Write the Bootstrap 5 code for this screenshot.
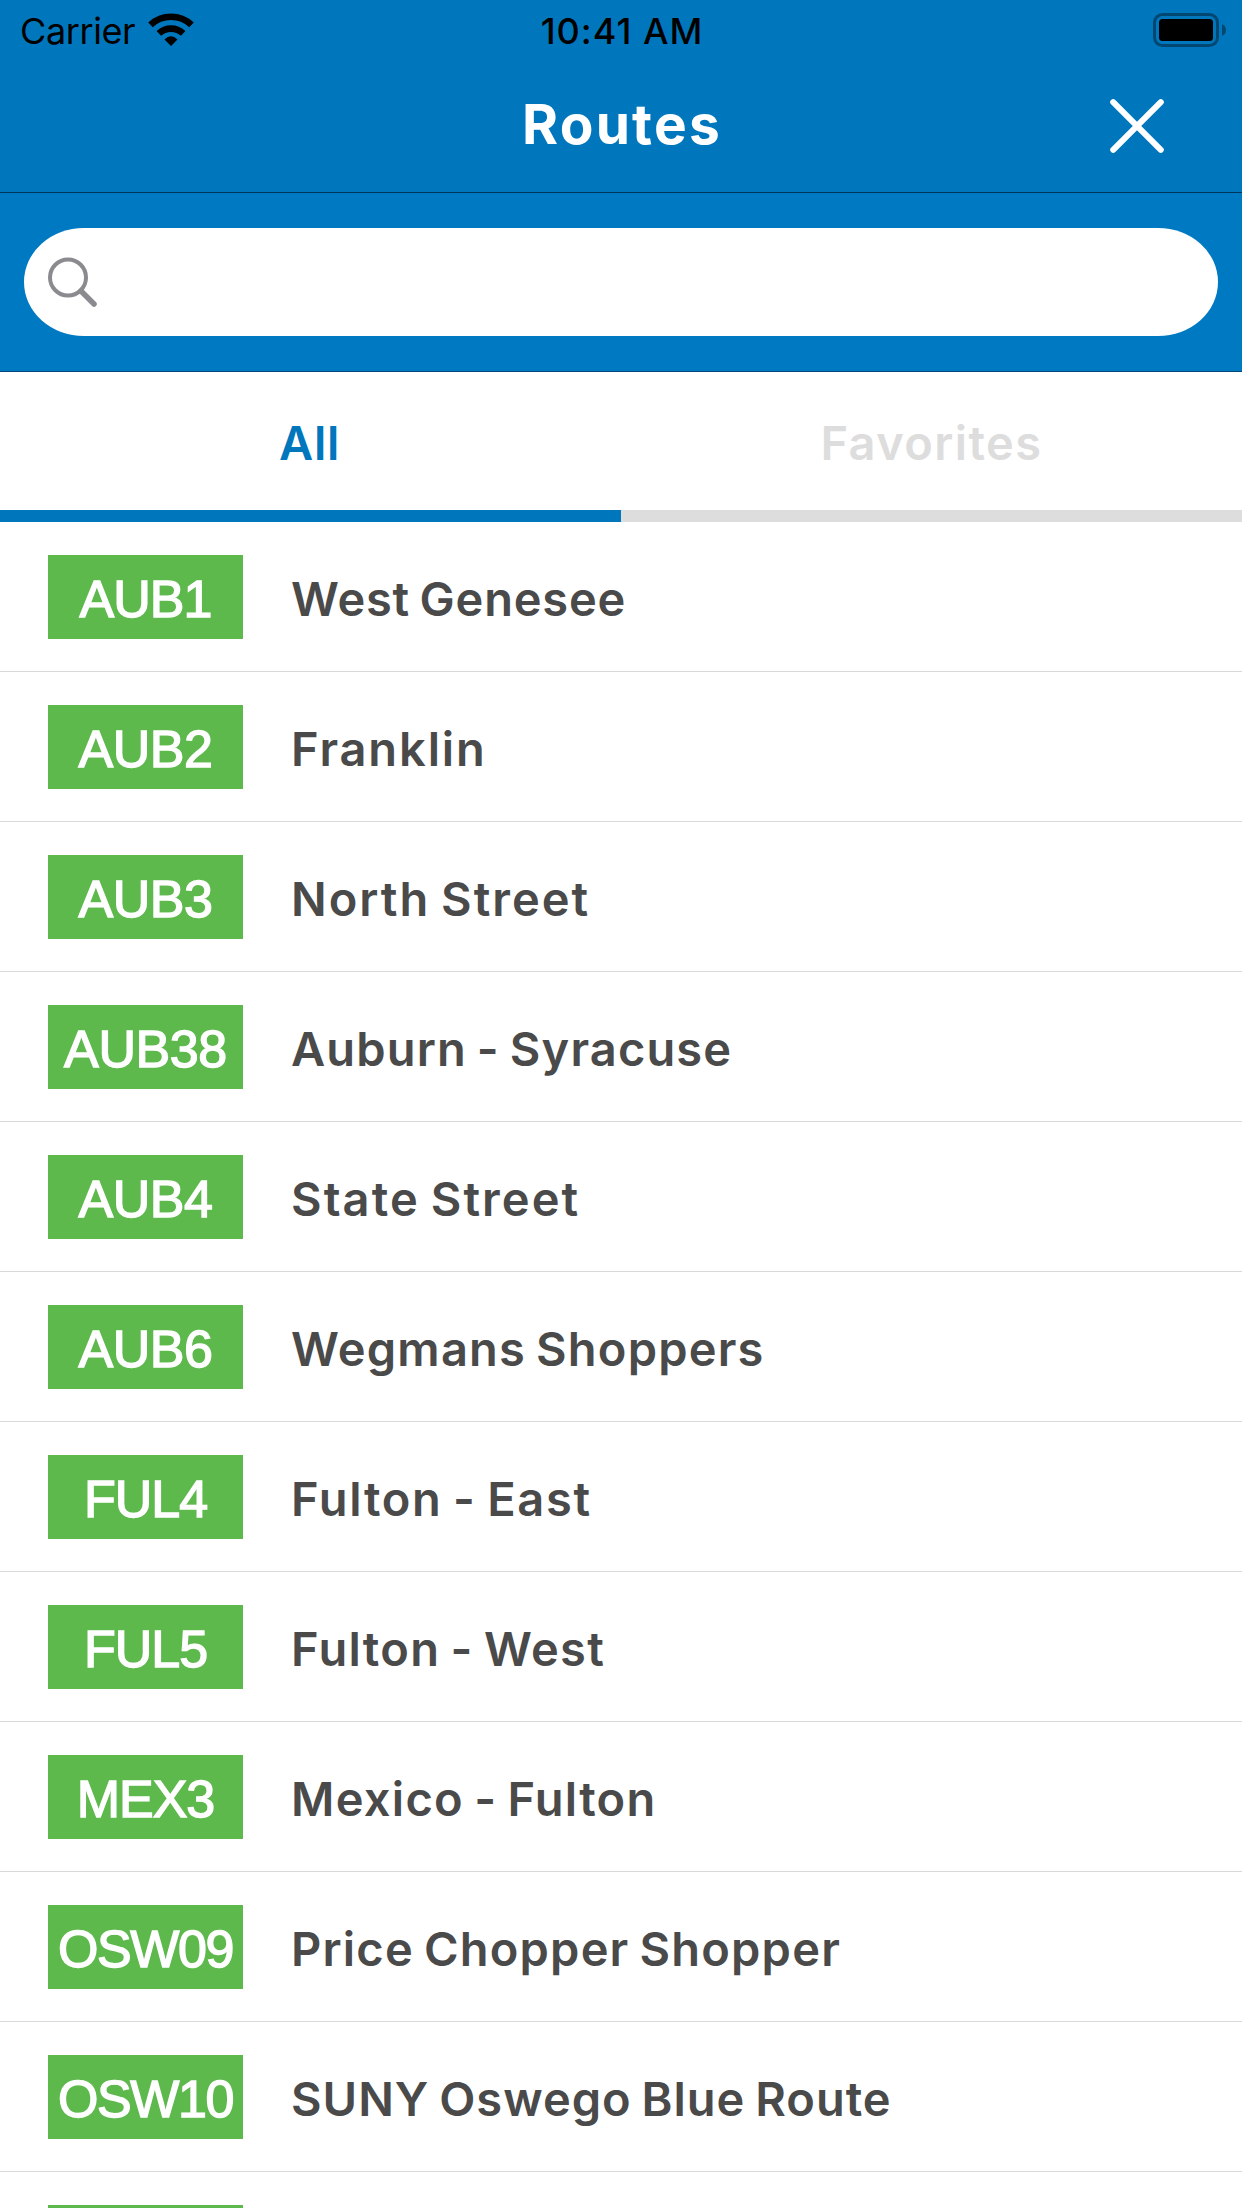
<!DOCTYPE html>
<html lang="en">
<head>
<meta charset="utf-8">
<meta name="viewport" content="width=device-width, initial-scale=1">
<title>Routes</title>
<link href="https://cdn.jsdelivr.net/npm/bootstrap@5.3.0/dist/css/bootstrap.min.css" rel="stylesheet">
<style>
  html, body { height: 2208px; overflow: hidden; }
  body { font-family: Inter, "Liberation Sans", sans-serif; background: #fff; color: #4a4a4a; }
  svg { display: block; }
  .app-top { background: #0077bd; height: 193px; border-bottom: 1px solid #00355a; }
  .status-row { height: 60px; padding: 0 16px 0 20px; font-size: 36px; line-height: 60px; color: #000; }
  .status-side { flex: 1 1 0; }
  .carrier { letter-spacing: -.4px; margin-top: 1px; }
  .wifi { margin-left: 13px; }
  .clock { font-weight: 500; letter-spacing: 1px; margin: 1px 2px 0 0; }
  .title-row { height: 132px; padding-right: 78px; padding-left: 134px; }
  .app-title { font-size: 55px; font-weight: 700; line-height: 66px; letter-spacing: 2.2px; color: #fff; margin: -5px 0 0; }
  .search-area { background: #0079c3; height: 179px; padding: 35px 24px 34px; border-bottom: 1px solid #00487a; }
  .search-pill { height: 108px; background: #fff; border-radius: 60px / 54px; padding-left: 24px; }
  .tab-strip { height: 150px; }
  .tab-item { height: 150px; padding: 4px 0 0 0; font-size: 47px; font-weight: 600; color: #ddd; border-bottom: 12px solid #ddd; letter-spacing: 1.4px; }
  .tab-item.active { padding-right: 2px; color: #0077bd; border-color: #0077bd; letter-spacing: .75px; }
  .route-list { height: 1686px; overflow: hidden; }
  .route { --track: 1.2px; flex: none; height: 150px; padding: 0 0 0 48px; border: 0; border-bottom: 1px solid #d9d9d9; background: #fff; color: #4a4a4a; }
  .route:last-child { height: 36px; padding-top: 33px; border-bottom: 0; overflow: hidden; }
  .route-code { flex: none; width: 195px; height: 84px; line-height: 88px; background: #5eb94d; color: #fff; font-family: "Liberation Sans", sans-serif; font-size: 52px; letter-spacing: -.4px; -webkit-text-stroke: 1.4px #fff; }
  .route-name { margin: 5px 0 0 48px; font-size: 47px; font-weight: 600; line-height: 60px; letter-spacing: var(--track); word-spacing: -3px; white-space: nowrap; }
  .route:nth-child(1) { --track: .8px; }
  .route:nth-child(2) { --track: 1.87px; }
  .route:nth-child(3) { --track: 2px; }
  .route:nth-child(4) { --track: 1.15px; }
  .route:nth-child(5) { --track: 2.1px; }
  .route:nth-child(7) { --track: 1.7px; }
  .route:nth-child(8) { --track: 1.35px; }
  .route:nth-child(9) { --track: 1.3px; }
  .route:nth-child(11) { --track: 1px; }
  .tight { letter-spacing: -1.4px; }
  .narrow { letter-spacing: -1px; }
</style>
</head>
<body>
<header class="app-top">
  <div class="status-row d-flex align-items-start">
    <div class="status-side d-flex">
      <span class="carrier">Carrier</span>
      <svg class="wifi" width="46" height="60" viewBox="149 0 46 60">
        <g fill="none" stroke="#000" stroke-width="6.600">
          <path d="M151.500 24.800A30 30 0 0 1 192.500 24.800"/>
          <path d="M159.800 33.400A18 18 0 0 1 184.200 33.400"/>
        </g>
        <path d="M165.500 39.400Q172 33 178.500 39.400L172 46Z"/>
      </svg>
    </div>
    <span class="clock">10:41 AM</span>
    <div class="status-side d-flex justify-content-end">
      <svg width="73" height="60" viewBox="1153 0 73 60">
        <rect x="1154.500" y="14.500" width="63" height="31" rx="8" fill="none" stroke="#004872" stroke-width="3"/>
        <rect x="1159" y="19" width="54" height="22" rx="3.500"/>
        <path d="M1222 24Q1226 26 1226 30T1222 36Z" fill="#004872"/>
      </svg>
    </div>
  </div>
  <div class="title-row d-flex align-items-center justify-content-between">
    <span></span>
    <h1 class="app-title">Routes</h1>
    <svg width="54" height="54" viewBox="0 0 54 54" fill="none" stroke="#fff" stroke-width="6" stroke-linecap="round"><path d="M3.200 3.200l47.600 47.600M50.800 3.200L3.200 50.800"/></svg>
  </div>
</header>
<div class="search-area">
  <div class="search-pill d-flex align-items-center">
    <svg width="50" height="50" viewBox="0 0 50 50" fill="none" stroke="#8a8a8f" stroke-linecap="round"><circle cx="20" cy="20.500" r="18" stroke-width="4"/><path d="M33 34l13 13" stroke-width="5.500"/></svg>
  </div>
</div>
<nav class="tab-strip row g-0">
  <div class="tab-item active col-6 d-flex align-items-center justify-content-center">All</div>
  <div class="tab-item col-6 d-flex align-items-center justify-content-center">Favorites</div>
</nav>
<main class="route-list list-group list-group-flush rounded-0">
  <div class="route list-group-item d-flex align-items-center"><div class="route-code text-center narrow">AUB1</div><div class="route-name">West Genesee</div></div>
  <div class="route list-group-item d-flex align-items-center"><div class="route-code text-center">AUB2</div><div class="route-name">Franklin</div></div>
  <div class="route list-group-item d-flex align-items-center"><div class="route-code text-center">AUB3</div><div class="route-name">North Street</div></div>
  <div class="route list-group-item d-flex align-items-center"><div class="route-code text-center">AUB38</div><div class="route-name">Auburn - Syracuse</div></div>
  <div class="route list-group-item d-flex align-items-center"><div class="route-code text-center">AUB4</div><div class="route-name">State Street</div></div>
  <div class="route list-group-item d-flex align-items-center"><div class="route-code text-center">AUB6</div><div class="route-name">Wegmans Shoppers</div></div>
  <div class="route list-group-item d-flex align-items-center"><div class="route-code text-center narrow">FUL4</div><div class="route-name">Fulton - East</div></div>
  <div class="route list-group-item d-flex align-items-center"><div class="route-code text-center narrow">FUL5</div><div class="route-name">Fulton - West</div></div>
  <div class="route list-group-item d-flex align-items-center"><div class="route-code text-center narrow">MEX3</div><div class="route-name">Mexico - Fulton</div></div>
  <div class="route list-group-item d-flex align-items-center"><div class="route-code text-center tight">OSW09</div><div class="route-name">Price Chopper Shopper</div></div>
  <div class="route list-group-item d-flex align-items-center"><div class="route-code text-center tight">OSW10</div><div class="route-name">SUNY Oswego Blue Route</div></div>
  <div class="route list-group-item d-flex align-items-start"><div class="route-code"></div></div>
</main>
<script src="https://cdn.jsdelivr.net/npm/bootstrap@5.3.0/dist/js/bootstrap.bundle.min.js"></script>
</body>
</html>
